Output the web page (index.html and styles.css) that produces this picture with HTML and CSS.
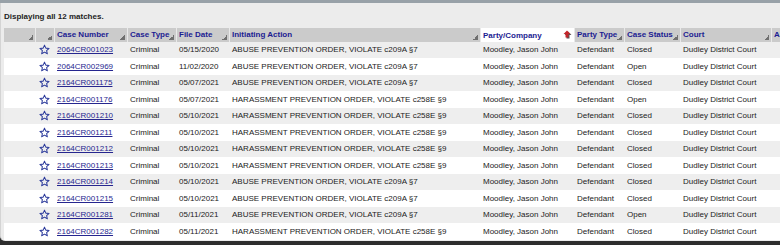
FILE: index.html
```html
<!DOCTYPE html>
<html>
<head>
<meta charset="utf-8">
<link rel="stylesheet" href="styles.css">
</head>
<body>
<div class="topbar"></div>
<div class="panel">
  <div class="caption">Displaying all 12 matches.</div>
  <div class="gridwrap">
  <table class="grid">
    <colgroup>
      <col class="c1"><col class="c2"><col class="c3"><col class="c4"><col class="c5"><col class="c6"><col class="c7"><col class="c8"><col class="c9"><col class="c10"><col class="c11">
    </colgroup>
    <thead>
      <tr>
        <th></th><th></th>
        <th>Case Number</th><th>Case Type</th><th>File Date</th><th>Initiating Action</th>
        <th class="sorted"><span>Party/Company</span><svg class="sorticon" width="9" height="9" viewBox="0 0 9 9"><polygon points="5,1.5 8.5,5 6.5,5 6.5,8.5 3.5,8.5 3.5,5 1.5,5" fill="#555"/><polygon points="4,0.5 7.5,4 5.5,4 5.5,7.5 2.5,7.5 2.5,4 0.5,4" fill="#c3252a"/></svg></th>
        <th>Party Type</th><th>Case Status</th><th>Court</th><th>A</th>
      </tr>
    </thead>
    <tbody id="rows"></tbody>
  </table>
  </div>
</div>
<template id="star"><svg class="star" width="11" height="11" viewBox="0 0 24 24"><polygon points="12,2.5 14.9,9 22,9.6 16.6,14.3 18.2,21.3 12,17.6 5.8,21.3 7.4,14.3 2,9.6 9.1,9" fill="none" stroke="#2b3a9b" stroke-width="2.2" stroke-linejoin="round"/></svg></template>
<script>
const data = [
 ["2064CR001023","05/15/2020","ABUSE PREVENTION ORDER, VIOLATE c209A §7","Closed"],
 ["2064CR002969","11/02/2020","ABUSE PREVENTION ORDER, VIOLATE c209A §7","Open"],
 ["2164CR001175","05/07/2021","ABUSE PREVENTION ORDER, VIOLATE c209A §7","Closed"],
 ["2164CR001176","05/07/2021","HARASSMENT PREVENTION ORDER, VIOLATE c258E §9","Open"],
 ["2164CR001210","05/10/2021","HARASSMENT PREVENTION ORDER, VIOLATE c258E §9","Closed"],
 ["2164CR001211","05/10/2021","HARASSMENT PREVENTION ORDER, VIOLATE c258E §9","Closed"],
 ["2164CR001212","05/10/2021","HARASSMENT PREVENTION ORDER, VIOLATE c258E §9","Closed"],
 ["2164CR001213","05/10/2021","HARASSMENT PREVENTION ORDER, VIOLATE c258E §9","Closed"],
 ["2164CR001214","05/10/2021","ABUSE PREVENTION ORDER, VIOLATE c209A §7","Closed"],
 ["2164CR001215","05/10/2021","ABUSE PREVENTION ORDER, VIOLATE c209A §7","Closed"],
 ["2164CR001281","05/11/2021","ABUSE PREVENTION ORDER, VIOLATE c209A §7","Open"],
 ["2164CR001282","05/11/2021","HARASSMENT PREVENTION ORDER, VIOLATE c258E §9","Closed"]
];
const star = document.getElementById('star').innerHTML;
const tb = document.getElementById('rows');
tb.innerHTML = data.map(r => `<tr><td></td><td class="starcell">${star}</td><td><a href="#">${r[0]}</a></td><td>Criminal</td><td>${r[1]}</td><td>${r[2]}</td><td>Moodley, Jason John</td><td>Defendant</td><td>${r[3]}</td><td>Dudley District Court</td><td></td></tr>`).join('');
</script>
</body>
</html>
```
FILE: styles.css
```css
html, body {
  margin: 0;
  padding: 0;
  background: #2d2d2d;
  overflow: hidden;
  width: 780px;
  height: 245px;
}
body {
  font-family: "Liberation Sans", Arial, sans-serif;
  font-size: 8px;
  color: #222;
}
.topbar {
  height: 3px;
  background: #98a1a8;
}
.panel {
  background: #ececec;
  border-left: 1px solid #d4d4d4;
  border-bottom-left-radius: 5px;
  height: 238px;
  overflow: hidden;
}
.caption {
  font-weight: bold;
  padding: 9px 0 0 3px;
  line-height: 10px;
  height: 16px;
  color: #1e1e1e;
}
.gridwrap {
  padding-left: 3px;
}
.grid {
  table-layout: fixed;
  width: 810px;
  border-collapse: separate;
  border-spacing: 0;
}
.c1 { width: 32px; }
.c2 { width: 19px; }
.c3 { width: 73px; }
.c4 { width: 49px; }
.c5 { width: 53px; }
.c6 { width: 251px; }
.c7 { width: 94px; }
.c8 { width: 50px; }
.c9 { width: 56px; }
.c10 { width: 91px; }
.c11 { width: 42px; }

.grid th {
  height: 13.5px;
  padding: 0 0 0 2px;
  text-align: left;
  font-weight: bold;
  color: #1c1c92;
  white-space: nowrap;
  overflow: hidden;
  background: linear-gradient(135deg, transparent 50%, #6f6f6f 50%) no-repeat right 2px bottom 2px / 5px 5px, #cbcbcb;
  border-right: 1px solid #e9e9e9;
}
.grid th.sorted {
  background: #fff;
}
.grid th.sorted {
  padding-right: 2px;
}
.grid th.sorted span {
  display: inline-block;
  width: 80px;
}
.sorticon {
  vertical-align: -1px;
}
.grid td {
  height: 16.5px;
  padding: 0 0 0 2px;
  white-space: nowrap;
  overflow: hidden;
  color: #222;
}
.grid tbody tr:nth-child(odd) td { background: #eeeeee; }
.grid tbody tr:nth-child(even) td { background: #ffffff; }
.grid td.starcell {
  padding-left: 3px;
}
.star {
  display: block;
}
.grid a {
  color: #26268f;
  text-decoration: underline;
}
```
